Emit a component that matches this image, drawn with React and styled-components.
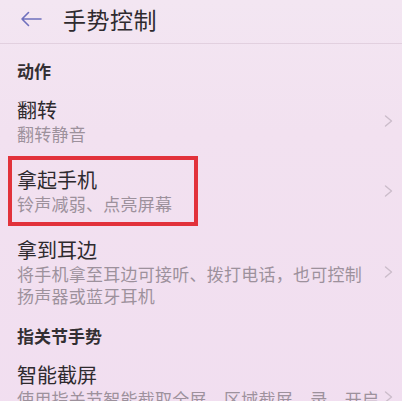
import React from "react";
import styled, { createGlobalStyle } from "styled-components";

const Global = createGlobalStyle`
  html, body {
    margin: 0;
    padding: 0;
    background: #f2e1f0;
  }
  body {
    font-family: "Noto Sans CJK SC", "Noto Sans", sans-serif;
    color: #333;
  }
`;

const Page = styled.div`
  width: 402px;
  min-height: 401px;
  background: linear-gradient(180deg, #f3e6f2 0%, #f2e1f0 30%, #f1def0 100%);
`;

const Header = styled.header`
  height: 37px;
  padding-bottom: 6px;
  display: flex;
  align-items: center;
  gap: 21px;
  padding-left: 20px;
  border-bottom: 1px solid #e2d0df;
`;

const BackButton = styled.button`
  border: 0;
  background: none;
  padding: 0;
  width: 22px;
  height: 16px;
  display: flex;
  align-items: center;
  cursor: pointer;
`;

const Title = styled.h1`
  margin: 0;
  font-size: 23px;
  line-height: 30px;
  font-weight: 400;
  color: #2e2a2e;
  letter-spacing: 0.5px;
`;

const List = styled.main`
  padding-top: 9px;
`;

const SectionHeader = styled.div`
  padding: 7px 17px 4px;
  font-size: 17px;
  line-height: 22px;
  font-weight: 700;
  color: #332f33;
`;

const Item = styled.div`
  position: relative;
  display: flex;
  align-items: center;
  padding: 11px 9px 11px 17px;
`;

const ItemText = styled.div`
  flex: 1;
  display: flex;
  flex-direction: column;
`;

const ItemTitle = styled.div`
  font-size: 20px;
  line-height: 26px;
  color: #2e2a2e;
`;

const ItemSub = styled.div`
  font-size: 17px;
  line-height: 22px;
  letter-spacing: 0.25px;
  color: #9d919c;
  white-space: pre-line;
`;

const Chevron = styled.svg`
  width: 9px;
  height: 12px;
  flex: none;
`;

const Highlight = styled.div`
  position: absolute;
  left: 8px;
  top: 0;
  bottom: 0;
  width: 190px;
  box-sizing: border-box;
  border: 4px solid #e2323b;
  pointer-events: none;
`;

const sections = [
  {
    title: "动作",
    items: [
      { title: "翻转", sub: "翻转静音" },
      { title: "拿起手机", sub: "铃声减弱、点亮屏幕", highlight: true },
      {
        title: "拿到耳边",
        sub: "将手机拿至耳边可接听、拨打电话，也可控制\n扬声器或蓝牙耳机",
      },
    ],
  },
  {
    title: "指关节手势",
    items: [
      {
        title: "智能截屏",
        sub: "使用指关节智能截取全屏、区域截屏、录、开启\n分屏",
      },
    ],
  },
];

export default function App() {
  return (
    <Page>
      <Global />
      <Header>
        <BackButton aria-label="返回">
          <svg width="22" height="16" viewBox="0 0 22 16" fill="none">
            <path
              d="M21 8H2M8.5 1.5L2 8l6.5 6.5"
              stroke="#6f70bd"
              strokeWidth="1.6"
              strokeLinecap="round"
              strokeLinejoin="round"
            />
          </svg>
        </BackButton>
        <Title>手势控制</Title>
      </Header>
      <List>
        {sections.map((s) => (
          <section key={s.title}>
            <SectionHeader>{s.title}</SectionHeader>
            {s.items.map((it) => (
              <Item key={it.title}>
                <ItemText>
                  <ItemTitle>{it.title}</ItemTitle>
                  <ItemSub>{it.sub}</ItemSub>
                </ItemText>
                <Chevron viewBox="0 0 9 12" fill="none">
                  <path
                    d="M1.5 1l6 5-6 5"
                    stroke="#cbbcca"
                    strokeWidth="1.4"
                    strokeLinecap="round"
                    strokeLinejoin="round"
                  />
                </Chevron>
                {it.highlight && <Highlight />}
              </Item>
            ))}
          </section>
        ))}
      </List>
    </Page>
  );
}
